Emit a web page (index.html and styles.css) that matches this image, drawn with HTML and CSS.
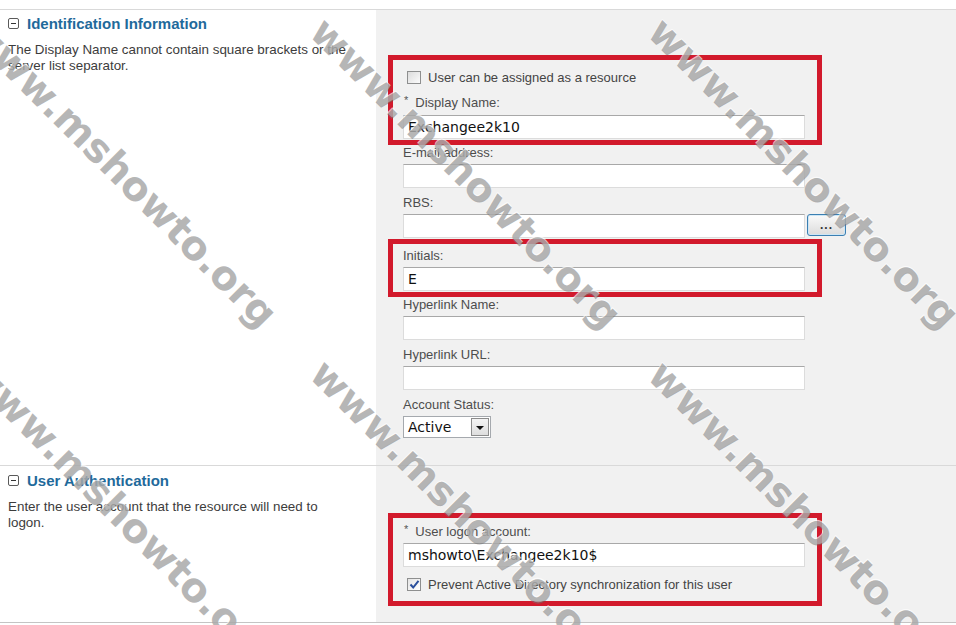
FILE: index.html
```html
<!DOCTYPE html>
<html>
<head>
    <title>New Resource - Identification</title>
    <link rel="stylesheet" href="styles.css">
</head>
<body>
<div class="page">
    <div class="section section-ident">
        <div class="info">
            <h3 class="sec-title"><span class="toggle"></span>Identification Information</h3>
            <p class="desc">The Display Name cannot contain square brackets or the server list separator.</p>
        </div>
        <div class="fields fields-ident">
            <div class="mark mark-top">
                <div class="check"><span class="box"></span>User can be assigned as a resource</div>
                <div class="lbl lbl-gap"><span class="req">*</span>Display Name:</div>
                <div class="input input-tight">Exchangee2k10</div>
            </div>

            <div class="field field-first">
                <div class="lbl">E-mail address:</div>
                <div class="input"></div>
            </div>

            <div class="field">
                <div class="lbl">RBS:</div>
                <div class="rbs">
                    <div class="input"></div>
                    <div class="browse">...</div>
                </div>
            </div>

            <div class="mark mark-initials">
                <div class="lbl">Initials:</div>
                <div class="input">E</div>
            </div>

            <div class="field field-first">
                <div class="lbl">Hyperlink Name:</div>
                <div class="input"></div>
            </div>

            <div class="field">
                <div class="lbl">Hyperlink URL:</div>
                <div class="input"></div>
            </div>

            <div class="field">
                <div class="lbl">Account Status:</div>
                <div class="select">
                    <span class="select-value">Active</span>
                    <span class="select-btn"><span class="arrow"></span></span>
                </div>
            </div>
        </div>
    </div>

    <div class="section section-auth">
        <div class="info info-auth">
            <h3 class="sec-title"><span class="toggle"></span>User Authentication</h3>
            <p class="desc">Enter the user account that the resource will need to logon.</p>
        </div>
        <div class="fields fields-auth">
            <div class="mark mark-logon">
                <div class="lbl"><span class="req">*</span>User logon account:</div>
                <div class="input">mshowto\Exchangee2k10$</div>
                <div class="check check-gap">
                    <span class="box box-checked">
                        <svg width="11" height="11" viewBox="0 0 11 11"><path d="M1.5 5.5 L4.2 8.5 L9.5 1.8" fill="none" stroke="#2a4f9c" stroke-width="2"/></svg>
                    </span>Prevent Active Directory synchronization for this user
                </div>
            </div>
        </div>
    </div>

    <!-- watermark overlay -->
    <div class="wm wm-1">www.mshowto.org</div>
    <div class="wm wm-2">www.mshowto.org</div>
    <div class="wm wm-3">www.mshowto.org</div>
    <div class="wm wm-4">www.mshowto.org</div>
    <div class="wm wm-5">www.mshowto.org</div>
    <div class="wm wm-6">www.mshowto.org</div>
</div>
</body>
</html>
```

FILE: styles.css
```css
* { box-sizing: border-box; }
body { margin: 0; font-family: "Liberation Sans", Arial, sans-serif; font-size: 13px; color: #3c3c3c; background: #fff; }
.page { position: relative; height: 625px; padding-top: 9px; overflow: hidden; }

.section { display: grid; grid-template-columns: 376px 1fr; border-top: 1px solid #d9d9d9; }
.section-ident { height: 456px; }
.section-auth { height: 158px; border-bottom: 1px solid #c4c4c4; }

/* left column */
.info { padding: 5px 8px 0; }
.info-auth { padding-top: 6px; }
.sec-title { margin: 0; display: flex; align-items: center; gap: 8px; height: 16px; font-size: 15px; font-weight: bold; color: #1f6a9b; }
.toggle { position: relative; width: 11px; height: 11px; border: 1px solid #5a5a5a; border-radius: 2px; background: #fff; }
.toggle::after { content: ""; position: absolute; left: 2px; top: 4px; width: 5px; height: 1px; background: #333; }
.desc { margin: 11px 0 0; width: 346px; font-size: 13.4px; line-height: 16px; }

/* right column */
.fields { background: #f1f1f1; padding-left: 27px; }
.fields-ident { padding-top: 45px; }
.fields-auth { padding-top: 47px; }

.mark { width: 434px; margin-left: -15px; border: 5px solid #d21a2c; padding: 0 12px 0 10px; }
.mark-top { padding-top: 8px; padding-bottom: 1px; }
.mark-initials { margin-top: 1px; padding-top: 4px; padding-bottom: 1px; }
.mark-logon { padding-top: 6px; padding-bottom: 8px; }

.field { margin-top: 7px; }
.field-first { margin-top: 0; }
.lbl { height: 16px; line-height: 16px; color: #4d4d4d; white-space: nowrap; }
.lbl-gap { margin-top: 9px; }
.req { display: inline-block; vertical-align: top; font-size: 11px; line-height: 11px; margin: 0 7px 0 1px; color: #555; }

.input { width: 402px; height: 24px; margin-top: 3px; padding: 0 4px; border: 1px solid #dcdcdc; border-top-color: #a8a8a8; background: #fff; font-family: "DejaVu Sans", Verdana, sans-serif; font-size: 14px; line-height: 22px; color: #111; }
.input-tight { margin-top: 4px; }

.rbs { display: flex; gap: 2px; margin-top: 3px; }
.rbs .input { margin-top: 0; }
.browse { width: 39px; height: 22px; border: 1px solid #3b7fb2; border-radius: 3px; background: linear-gradient(#fafafa, #dcdcdc); box-shadow: inset 0 0 0 1px #cde6f5; text-align: center; font-size: 12px; font-weight: bold; line-height: 20px; letter-spacing: 1px; color: #333; }

.select { display: flex; align-items: center; justify-content: space-between; width: 88px; height: 22px; margin-top: 3px; padding: 0 1px 0 4px; border: 1px solid #a5a9ae; background: #fff; }
.select-value { font-family: "DejaVu Sans", Verdana, sans-serif; font-size: 14px; color: #111; }
.select-btn { display: flex; align-items: center; justify-content: center; width: 18px; height: 18px; border: 1px solid #8c8c8c; background: linear-gradient(#f4f4f4, #dedede); }
.arrow { width: 0; height: 0; border-left: 4px solid transparent; border-right: 4px solid transparent; border-top: 4px solid #111; margin-top: 2px; }

.check { display: flex; align-items: center; gap: 7px; height: 18px; padding-left: 4px; color: #444; white-space: nowrap; }
.check-gap { margin-top: 8px; }
.box { display: flex; align-items: center; justify-content: center; width: 14px; height: 13px; border: 1px solid #8e8f8f; background: linear-gradient(135deg, #dcdcdc, #fbfbfb); }
.box-checked { background: linear-gradient(135deg, #e4e4e4, #ffffff); }

/* watermarks */
.wm { position: absolute; transform: translate(-50%, -50%) rotate(45deg); font-family: "DejaVu Sans", Verdana, sans-serif; font-size: 40px; font-weight: bold; white-space: nowrap; color: rgba(110, 110, 110, 0.5); text-shadow: -1px -1px 0 rgba(255, 255, 255, 0.7); }
.wm-1 { left: 122px; top: 172px; }
.wm-2 { left: 466px; top: 173px; }
.wm-3 { left: 804px; top: 173px; }
.wm-4 { left: 122px; top: 514px; }
.wm-5 { left: 466px; top: 515px; }
.wm-6 { left: 804px; top: 516px; }
```
